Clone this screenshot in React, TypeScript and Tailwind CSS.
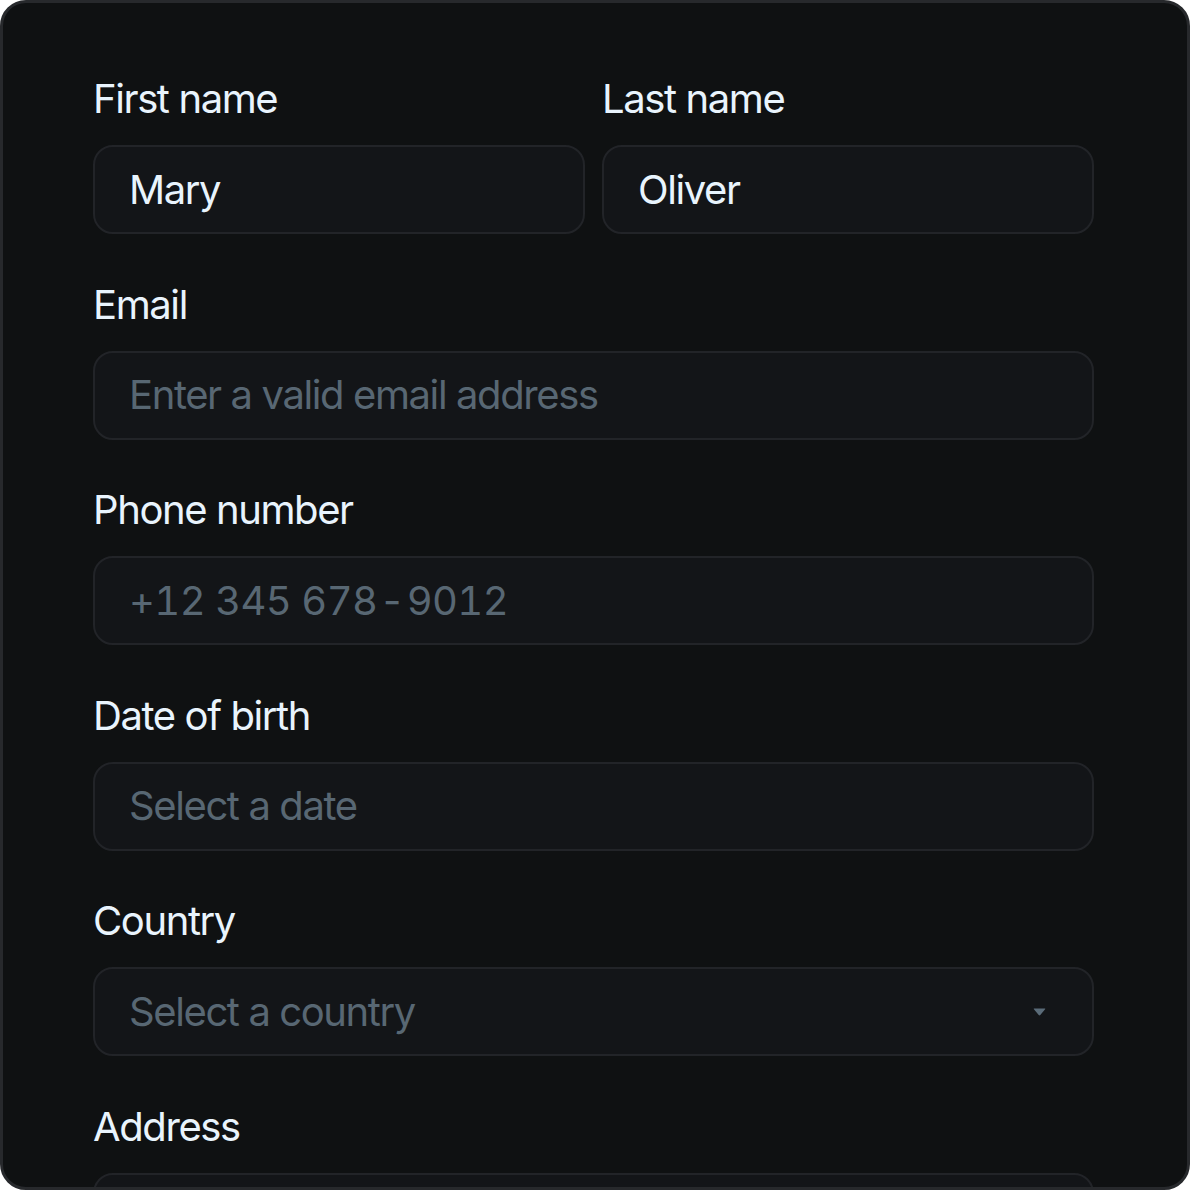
import React from "react";

const font = { fontFamily: "Inter, 'Noto Sans', sans-serif" };

function Label({ children }: { children: React.ReactNode }) {
  return (
    <div className="text-[40px] leading-[48px] text-[#e9f4fd] mb-[22px] tracking-[-1.4px]">
      {children}
    </div>
  );
}

function Field({
  value,
  placeholder,
  caret,
}: {
  value?: string;
  placeholder?: React.ReactNode;
  caret?: boolean;
}) {
  return (
    <div className="h-[89px] rounded-[20px] border-2 border-[#222428] bg-[#131518] flex items-center pl-[34px] pr-[46px]">
      <span
        className={
          "flex-1 text-[40px] leading-[48px] tracking-[-1.4px] " +
          (value ? "text-[#e9f4fd]" : "text-[#586773]")
        }
      >
        {value ?? placeholder}
      </span>
      {caret && (
        <svg width="13" height="8" viewBox="0 0 13 8" className="shrink-0">
          <path
            d="M1.2 0.5 H11.8 Q12.8 0.5 12.1 1.3 L7.3 7 Q6.5 7.8 5.7 7 L0.9 1.3 Q0.2 0.5 1.2 0.5 Z"
            fill="#5a6b78"
          />
        </svg>
      )}
    </div>
  );
}

export default function App() {
  return (
    <div className="w-[1190px] h-[1190px] bg-white" style={font}>
      <div className="w-full h-full rounded-[26px] border-[3px] border-[#27292c] bg-[#0f1112] overflow-hidden pl-[90px] pt-[72px]">
        <div className="w-[1001px] flex flex-col gap-[46.6px]">
          <div className="grid grid-cols-2 gap-x-[17px]">
            <div>
              <Label>First name</Label>
              <Field value="Mary" />
            </div>
            <div>
              <Label>Last name</Label>
              <Field value="Oliver" />
            </div>
          </div>
          <div>
            <Label>Email</Label>
            <Field placeholder="Enter a valid email address" />
          </div>
          <div>
            <Label>Phone number</Label>
            <Field
              placeholder={
                <span className="tracking-[-0.6px] tabular-nums">
                  +12 345 678<span className="mx-[2px]">-</span>9012
                </span>
              }
            />
          </div>
          <div>
            <Label>Date of birth</Label>
            <Field placeholder="Select a date" />
          </div>
          <div>
            <Label>Country</Label>
            <Field placeholder="Select a country" caret />
          </div>
          <div>
            <Label>Address</Label>
            <Field placeholder="" />
          </div>
        </div>
      </div>
    </div>
  );
}
